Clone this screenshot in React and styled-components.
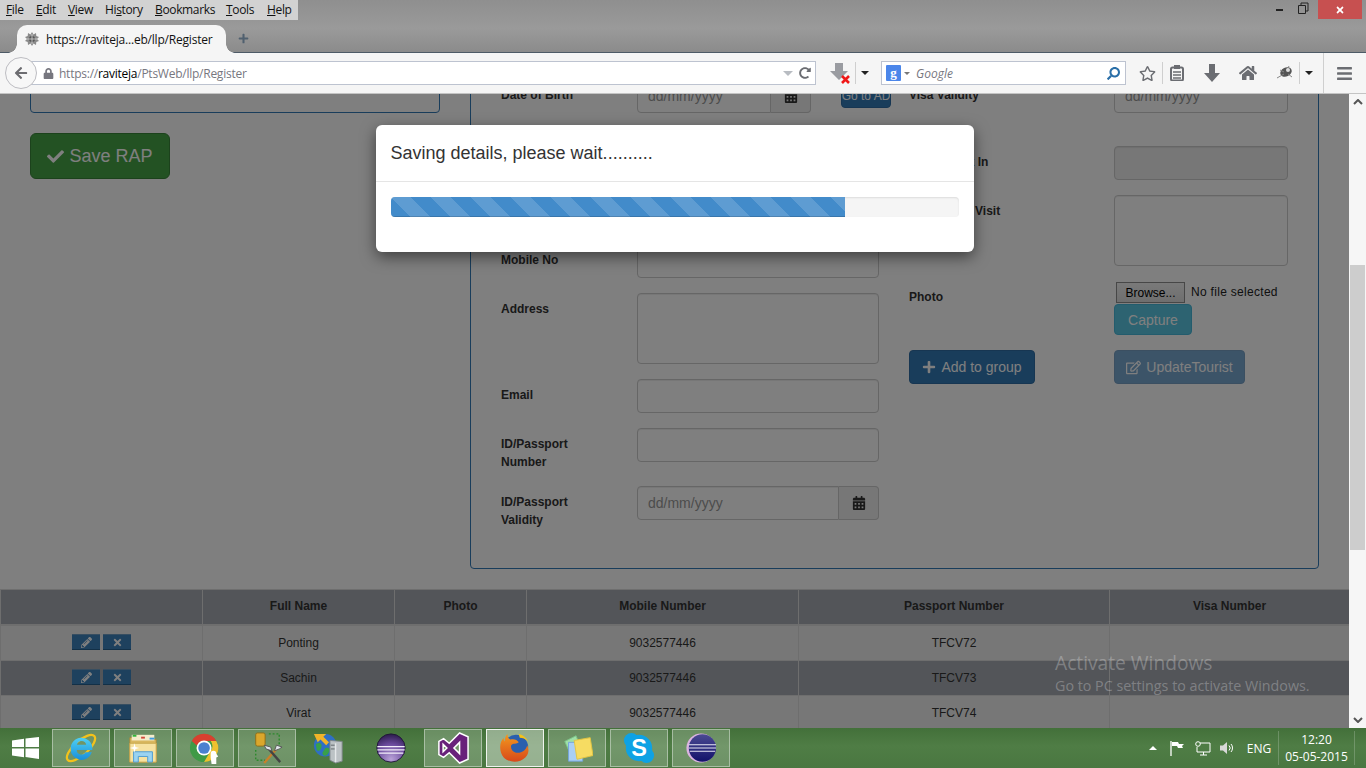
import React from 'react';
import styled, {createGlobalStyle} from 'styled-components';
import {FaArrowLeft, FaLock, FaRegStar, FaHome, FaBars, FaCheck, FaPlus, FaRegEdit, FaCalendarAlt, FaPencilAlt, FaTimes, FaSearch, FaRedoAlt} from 'react-icons/fa';

const GlobalStyle = createGlobalStyle`
	html, body {
		margin: 0;
		padding: 0;
		background: #7f7f7f;
		overflow: hidden;
	}
	* {
		box-sizing: border-box;
	}
`;

const UI_FONT = '"Open Sans", "Noto Sans", sans-serif';
const PAGE_FONT = '"Liberation Sans", Arial, sans-serif';

const Screen = styled.div`
	position: relative;
	width: 1366px;
	height: 768px;
	display: flex;
	flex-direction: column;
	overflow: hidden;
	font-family: ${PAGE_FONT};
`;

//Browser title area
const TitleArea = styled.div`
	position: relative;
	height: 53px;
	flex: none;
	background: linear-gradient(#8f8f8f, #9a9a9a 55%, #8b8b8b);
	border-bottom: 1px solid #4d5a66;
`;

const MenuBar = styled.div`
	display: flex;
	width: 298px;
	height: 20px;
	padding-left: 6px;
	background: #d2d2d2;
	font: 12px/20px ${UI_FONT};
	letter-spacing: -0.35px;
	color: #111;
`;

const MenuItem = styled.span`
	width: ${p => p.$w}px;
`;

const TabStrip = styled.div`
	display: flex;
	align-items: flex-end;
	height: 32px;
	padding-left: 17px;
`;

const Tab = styled.div`
	position: relative;
	z-index: 1;
	display: flex;
	align-items: center;
	gap: 7px;
	width: 209px;
	height: 28px;
	margin-bottom: -1px;
	padding-left: 8px;
	background: #f5f5f5;
	border-radius: 10px 10px 0 0;
	font: 12px ${UI_FONT};
	letter-spacing: -0.2px;
	color: #111;
	&::before, &::after {
		content: '';
		position: absolute;
		bottom: 0;
		width: 9px;
		height: 9px;
	}
	&::before {
		left: -9px;
		background: radial-gradient(circle at 0 0, transparent 8.5px, #f5f5f5 9px);
	}
	&::after {
		right: -9px;
		background: radial-gradient(circle at 100% 0, transparent 8.5px, #f5f5f5 9px);
	}
`;

const NewTab = styled.div`
	display: flex;
	margin: 0 0 8px 12px;
	color: #50606f;
`;

const WindowControls = styled.div`
	position: absolute;
	top: 0;
	right: 4px;
	display: flex;
	height: 19px;
`;

const CloseButton = styled.div`
	display: flex;
	align-items: center;
	justify-content: center;
	width: 44px;
	height: 19px;
	margin-left: 9px;
	background: #c75050;
`;

//Navigation bar
const NavBar = styled.div`
	display: flex;
	align-items: center;
	height: 41px;
	flex: none;
	padding-left: 5px;
	background: #f5f5f5;
	border-bottom: 1px solid #c4c4c4;
	color: #6d6d72;
`;

const BackButton = styled.div`
	position: relative;
	z-index: 1;
	display: flex;
	align-items: center;
	justify-content: center;
	width: 32px;
	height: 32px;
	background: #f7f7f7;
	border: 1px solid #bdbdc2;
	border-radius: 50%;
	color: #6c6c70;
`;

const UrlBar = styled.div`
	display: flex;
	align-items: center;
	width: 790px;
	height: 24px;
	margin-left: -11px;
	padding-left: 16px;
	background: #fff;
	border: 1px solid #bdc3d0;
	font: 12px ${UI_FONT};
	letter-spacing: -0.25px;
	color: #77777f;
`;

const UrlText = styled.span`
	flex: 1;
	margin-left: 5px;
	b {
		font-weight: 400;
		color: #000;
	}
`;

const Caret = styled.span`
	display: inline-block;
	width: 0;
	height: 0;
	margin-right: ${p => p.$after || 0}px;
	border-left: ${p => p.$size || 4}px solid transparent;
	border-right: ${p => p.$size || 4}px solid transparent;
	border-top: ${p => p.$size || 4}px solid ${p => p.$color || '#222'};
`;

const UpCaret = styled(Caret)`
	transform: rotate(180deg);
`;

const Divider = styled.span`
	flex: none;
	width: 1px;
	height: ${p => p.$tall ? 40 : 22}px;
	margin-right: ${p => p.$after || 0}px;
	background: #cfcfcf;
`;

const ToolSlot = styled.div`
	display: flex;
	flex: none;
	align-items: center;
	justify-content: center;
	width: ${p => p.$w}px;
	padding-left: ${p => p.$shift || 0}px;
	color: #6b6d72;
`;

const SearchBar = styled.div`
	display: flex;
	align-items: center;
	flex: none;
	width: 245px;
	height: 24px;
	margin-left: 7px;
	padding: 0 5px 0 4px;
	background: #fff;
	border: 1px solid #bdc3d0;
	font: italic 12px ${UI_FONT};
	color: #77777f;
`;

const GoogleBadge = styled.span`
	width: 15px;
	height: 16px;
	margin-right: 3px;
	background: #4b86ea;
	border-radius: 1px;
	color: #fff;
	font: 700 13px/15px "Liberation Serif", serif;
	text-align: center;
`;

const SearchText = styled.span`
	flex: 1;
	margin-left: 6px;
`;

const SearchIcon = styled(FaSearch)`
	transform: scaleX(-1);
	color: #2a6fa8;
`;

//Page
const PageRow = styled.div`
	display: flex;
	flex: 1;
	min-height: 0;
`;

const Viewport = styled.div`
	position: relative;
	width: 1349px;
	overflow: hidden;
	background: #fff;
	font-size: 12px;
	color: #333;
`;

const Backdrop = styled.div`
	position: absolute;
	inset: 0;
	display: flex;
	justify-content: center;
	padding-top: 31px;
	background: rgba(0, 0, 0, 0.5);
`;

const Modal = styled.div`
	width: 598px;
	height: 127px;
	background: #fff;
	border-radius: 6px;
	box-shadow: 0 5px 15px rgba(0, 0, 0, 0.5);
`;

const ModalHeader = styled.div`
	padding: 15px;
	border-bottom: 1px solid #e5e5e5;
	font-size: 18px;
	line-height: 26px;
	color: #333;
`;

const ModalBody = styled.div`
	padding: 15px;
`;

const Progress = styled.div`
	height: 20px;
	overflow: hidden;
	background: #f5f5f5;
	border-radius: 4px;
	box-shadow: inset 0 1px 2px rgba(0, 0, 0, 0.1);
`;

const ProgressBar = styled.div`
	height: 100%;
	background-color: #428bca;
	background-image: linear-gradient(45deg, rgba(255,255,255,.15) 25%, transparent 25%, transparent 50%, rgba(255,255,255,.15) 50%, rgba(255,255,255,.15) 75%, transparent 75%, transparent);
	background-size: 40px 40px;
	box-shadow: inset 0 -1px 0 rgba(0, 0, 0, 0.15);
`;

const Columns = styled.div`
	display: grid;
	grid-template-columns: 410px 849px;
	gap: 30px;
	margin: -40px 0 0 30px;
`;

const LeftPanel = styled.div`
	height: 59px;
	border: 1px solid #337ab7;
	border-radius: 4px;
`;

const Button = styled.button`
	display: inline-flex;
	align-items: center;
	justify-content: center;
	gap: 5px;
	width: ${p => p.$w}px;
	height: ${p => p.$h || 34}px;
	padding: 0;
	background: ${p => p.$bg};
	border: 1px solid ${p => p.$border};
	border-radius: 4px;
	color: #fff;
	font: ${p => p.$size || 14}px ${PAGE_FONT};
	opacity: ${p => p.$faded ? 0.65 : 1};
`;

const SaveButton = styled(Button)`
	margin-top: 20px;
	border-radius: 6px;
`;

const FormPanel = styled.div`
	display: grid;
	grid-template-columns: 408px 379px;
	height: 515px;
	padding: 24px 30px 0;
	border: 1px solid #337ab7;
	border-radius: 4px;
`;

const FormColumn = styled.div`
	display: flex;
	flex-direction: column;
`;

const FormRow = styled.div`
	display: flex;
	align-items: flex-start;
	margin-bottom: ${p => p.$after === undefined ? 15 : p.$after}px;
`;

const Label = styled.label`
	flex: none;
	width: ${p => p.$w || 136}px;
	padding-top: 7px;
	font-weight: 700;
	line-height: 18px;
`;

const FieldStack = styled.div`
	display: flex;
	flex-direction: column;
`;

const Input = styled.div`
	width: ${p => p.$w || 242}px;
	height: ${p => p.$h || 34}px;
	padding: 6px 10px;
	background: ${p => p.$disabled ? '#eee' : '#fff'};
	border: 1px solid #ccc;
	border-radius: 4px;
	box-shadow: inset 0 1px 1px rgba(0, 0, 0, 0.075);
	font-size: 14px;
	line-height: 20px;
	color: #999;
`;

const InputGroup = styled.div`
	display: flex;
	width: ${p => p.$w}px;
	height: 34px;
`;

const GroupInput = styled(Input)`
	flex: 1;
	width: auto;
	border-radius: 4px 0 0 4px;
`;

const Addon = styled.div`
	display: flex;
	align-items: center;
	justify-content: center;
	width: 40px;
	background: #eee;
	border: 1px solid #ccc;
	border-left: 0;
	border-radius: 0 4px 4px 0;
	color: #333;
	font-size: 14px;
`;

const GoButton = styled(Button)`
	margin: 5px 0 0 30px;
	white-space: nowrap;
	overflow: hidden;
`;

const FileRow = styled.div`
	display: flex;
	align-items: flex-start;
	gap: 6px;
	height: 23px;
	padding: 1px 0 0 2px;
	line-height: 21px;
	letter-spacing: 0.3px;
	color: #222;
`;

const BrowseButton = styled.div`
	width: 69px;
	height: 21px;
	background: linear-gradient(#f4f4f4, #dedede);
	border: 1px solid #8e8e8e;
	line-height: 20px;
	text-align: center;
	color: #000;
	letter-spacing: 0;
`;

const ButtonRow = styled.div`
	display: flex;
	margin-top: 15px;
`;

const ButtonSlot = styled.div`
	width: 205px;
`;

const Table = styled.table`
	width: 1349px;
	margin-top: 20px;
	table-layout: fixed;
	border-collapse: collapse;
	font-size: 12px;
	line-height: 18px;
	text-align: center;
	th, td {
		padding: 8px;
		border: 1px solid #ddd;
	}
	th {
		padding: 7px 8px 9px;
		border-bottom-width: 2px;
	}
`;

const Col = styled.col`
	width: ${p => p.$w}px;
`;

const HeadRow = styled.tr`
	background: #a6abb3;
`;

const BodyRow = styled.tr`
	background: ${p => p.$dark ? '#a6abb3' : '#eee'};
`;

const MiniButton = styled.span`
	display: inline-flex;
	align-items: center;
	justify-content: center;
	width: 28px;
	height: 16px;
	margin: 0 1.5px;
	vertical-align: top;
	background: #3c82bd;
	border-top: 1px solid #6f9cc2;
	border-bottom: 1px solid #26618f;
	color: #fff;
	font-size: 11px;
`;

const Scrollbar = styled.div`
	position: relative;
	display: flex;
	flex: 1;
	flex-direction: column;
	align-items: center;
	justify-content: space-between;
	padding: 5px 0;
	background: #f6f6f6;
`;

const Thumb = styled.div`
	position: absolute;
	top: 171px;
	left: 1px;
	width: 15px;
	height: 285px;
	background: #cdcdcd;
`;

const Watermark = styled.div`
	position: absolute;
	left: 1055px;
	top: 649px;
	font-family: ${UI_FONT};
	color: rgba(255, 255, 255, 0.27);
	font-size: 14.3px;
	line-height: 20px;
	div:first-child {
		font-size: 19.2px;
		line-height: 27px;
	}
`;

//Taskbar
const Taskbar = styled.div`
	display: flex;
	align-items: center;
	flex: none;
	height: 40px;
	padding-left: 12px;
	background: linear-gradient(#43703a, #4f7d45 45%, #4a7741);
	color: #fff;
	font-family: ${UI_FONT};
`;

const StartSlot = styled.div`
	display: flex;
	width: 40px;
`;

const TaskButton = styled.div`
	display: flex;
	align-items: center;
	justify-content: center;
	width: 58px;
	height: 38px;
	margin-right: 4px;
	background: ${p => p.$active ? 'rgba(255,255,255,.42)' : p.$plain ? 'transparent' : 'rgba(255,255,255,.2)'};
	border: 1px solid ${p => p.$active ? 'rgba(255,255,255,.85)' : p.$plain ? 'transparent' : 'rgba(255,255,255,.4)'};
`;

const Tray = styled.div`
	display: flex;
	align-items: center;
	margin-left: auto;
	height: 100%;
`;

const TrayIcon = styled.div`
	display: flex;
	justify-content: center;
	width: ${p => p.$w}px;
`;

const Lang = styled.div`
	width: 40px;
	padding-left: 2px;
	text-align: center;
	font-size: 12px;
`;

const Clock = styled.div`
	width: 77px;
	margin-right: 1px;
	border-left: 1px solid rgba(255, 255, 255, 0.2);
	border-right: 1px solid rgba(255, 255, 255, 0.2);
	font-size: 12px;
	line-height: 17px;
	text-align: center;
`;

const TaskIcon = ({children}) => (
	<svg width="32" height="32" viewBox="0 0 34 34">{children}</svg>
);

const StartLogo = () => (
	<svg width="27" height="22" viewBox="0 0 27 22">
		<path d="M0 3.500 12 1.700V10H0zM13.500 1.500 27 0v10H13.500zM0 11.500h12v8.800L0 18.600zM13.500 11.500H27V22l-13.500-1.900z" fill="#fff"/>
	</svg>
);

const IeIcon = () => (
	<TaskIcon>
		<defs>
			<linearGradient id="ieBlue" x1="0" y1="0" x2="0" y2="1">
				<stop offset="0" stopColor="#4fd0f5"/>
				<stop offset="1" stopColor="#1a8fd8"/>
			</linearGradient>
		</defs>
		<ellipse cx="17" cy="17" rx="19" ry="7.500" transform="rotate(-42 17 17)" fill="none" stroke="#f3c21b" strokeWidth="2.400"/>
		<path d="M6 18a11.500 11.500 0 0 1 23-1v2H12.500a5 5 0 0 0 9.300 2.500h6.700A11.500 11.500 0 0 1 6 18zm6.700-4.500h9.800a5 5 0 0 0-9.800 0z" fill="url(#ieBlue)"/>
	</TaskIcon>
);

const FolderIcon = () => (
	<TaskIcon>
		<path d="M3 6h12l2 2h14v24H3z" fill="#d9b85f" stroke="#a88a3c"/>
		<rect x="5" y="3" width="24" height="6" fill="#f4eccb"/>
		<rect x="6" y="3" width="4" height="2" fill="#2fb53a"/>
		<rect x="15" y="5" width="4" height="2" fill="#d2483c"/>
		<rect x="24" y="6" width="5" height="2" fill="#3f9ce0"/>
		<path d="M3 12h28v20H3z" fill="#f6e2a0" stroke="#c9a94e"/>
		<path d="M7 32v-11h20v11h-5v-6H12v6z" fill="#9ad3f0" stroke="#4c9bd0"/>
		<path d="M8 12l1 4 4 1-4 1-1 4-1-4-4-1 4-1z" fill="#fff"/>
	</TaskIcon>
);

const ChromeIcon = () => (
	<TaskIcon>
		<circle cx="16" cy="17" r="15" fill="#3f9a46"/>
		<path d="M29 9.500A15 15 0 0 1 16 32l7-12a8 8 0 0 0 0-10.500z" fill="#efc12f"/>
		<path d="M3 9.500A15 15 0 0 1 29 9.500H16a8 8 0 0 0-7.500 5z" fill="#d8402f"/>
		<circle cx="16" cy="17" r="8" fill="#fff"/>
		<circle cx="16" cy="17" r="6.200" fill="#4a80d0"/>
		<path d="M23 23a3 3 0 0 1 6 0l2 3-2 1v7h-5l-1-7z" fill="#fff"/>
	</TaskIcon>
);

const ToolsIcon = () => (
	<TaskIcon>
		<rect x="5" y="1" width="10" height="14" rx="2" fill="#dba72c" stroke="#8f6d18"/>
		<path d="M19 2h11v11M5 19v11h10" fill="none" stroke="#2c8a2c" strokeWidth="1.500" strokeDasharray="2 2"/>
		<path d="M14 33 27 18" stroke="#c9802a" strokeWidth="2.500"/>
		<path d="M18 17 31 32" stroke="#444" strokeWidth="2.500"/>
		<path d="M14 14l7 2 1 4-6-2zM25 20l2-6 6 2-3 2z" fill="#dfe5ea" stroke="#555"/>
	</TaskIcon>
);

const GlobeServerIcon = () => (
	<TaskIcon>
		<circle cx="13" cy="14" r="12" fill="#2f6fc4"/>
		<path d="M3 13c4-3 7-1 6 3s-3 5-5 3zM13 17c5-1 6 2 3 6s-6 2-6-1z" fill="#39a04a"/>
		<path d="M1 2h13l-3 3 6 6-3 3-6-6-3 3z" fill="#f0b429"/>
		<path d="M18 9l13 1v21l-7 2-6-3z" fill="#bcc2c5" stroke="#7c8488"/>
		<path d="M24 12v20" stroke="#e5e8ea" strokeWidth="1.500"/>
		<path d="M19 14h4M19 18h4" stroke="#5f666a"/>
	</TaskIcon>
);

const OrbIcon = () => (
	<TaskIcon>
		<defs>
			<radialGradient id="orbPurple" cx="0.5" cy="0.9" r="0.9">
				<stop offset="0" stopColor="#b9a2d8"/>
				<stop offset="0.6" stopColor="#6a4a9c"/>
				<stop offset="1" stopColor="#2b1b4b"/>
			</radialGradient>
		</defs>
		<circle cx="17" cy="17" r="15" fill="url(#orbPurple)" stroke="#1f1536"/>
		<path d="M2.500 15.500h29M2.500 19h29M4 22.500h26" stroke="#f3eefa" strokeWidth="1.200"/>
	</TaskIcon>
);

const StudioIcon = () => (
	<TaskIcon>
		<path d="M24 1 33 5v24l-9 4-11-11-6 5-5-3V10l5-3 6 5zM24 11l-6 6 6 6zM6.500 13v8l4-4z" fill="#68217a" stroke="#fff" strokeWidth="1.600"/>
	</TaskIcon>
);

const FoxIcon = () => (
	<TaskIcon>
		<defs>
			<linearGradient id="foxOrange" x1="0" y1="0" x2="0" y2="1">
				<stop offset="0" stopColor="#f29a1f"/>
				<stop offset="1" stopColor="#d8481a"/>
			</linearGradient>
		</defs>
		<circle cx="18" cy="16" r="13" fill="#2a5fae"/>
		<path d="M9 2c0 3 1 5 3 6 4-1 7 0 9 3-2 2-6 1-8 3-1 3 1 7 5 8 6 1 11-3 12-8 2 4 2 9-2 13-6 6-17 6-23 0C0 21 0 11 5 6c0 2 0 3 1 4 0-3 1-6 3-8z" fill="url(#foxOrange)"/>
		<path d="M21 2c5 1 8 4 10 8-3-3-6-4-9-4z" fill="#f3c21b"/>
	</TaskIcon>
);

const NotesIcon = () => (
	<TaskIcon>
		<path d="M4 10 16 4l7 18-11 6z" fill="#9fe0a8" stroke="#7cc488"/>
		<path d="M8 11h15v20H8z" fill="#a9cff5" stroke="#74a4dc"/>
		<path d="M14 9l17-3 3 19-17 4z" fill="#f6dc62" stroke="#e2c441"/>
	</TaskIcon>
);

const SkypeIcon = () => (
	<TaskIcon>
		<circle cx="9" cy="9" r="8" fill="#0ea2e4"/>
		<circle cx="25" cy="25" r="8" fill="#0ea2e4"/>
		<circle cx="17" cy="17" r="14" fill="#0ea2e4"/>
		<text x="17" y="26" textAnchor="middle" fontFamily={PAGE_FONT} fontWeight="700" fontSize="25" fill="#fff">S</text>
	</TaskIcon>
);

const EclipseIcon = () => (
	<TaskIcon>
		<defs>
			<linearGradient id="eclipseNavy" x1="0" y1="0" x2="0" y2="1">
				<stop offset="0" stopColor="#4b4a92"/>
				<stop offset="1" stopColor="#12126a"/>
			</linearGradient>
		</defs>
		<circle cx="17" cy="17" r="15.500" fill="#dcb4e2"/>
		<circle cx="18.500" cy="17" r="14.500" fill="url(#eclipseNavy)"/>
		<path d="M4 13.500h29M4 17h29M5 20.500h27" stroke="#e8e8f4" strokeWidth="1.200"/>
	</TaskIcon>
);

const AddonBug = () => (
	<svg width="18" height="16" viewBox="0 0 18 16">
		<ellipse cx="10" cy="7" rx="6" ry="4.500" fill="#555" transform="rotate(-25 10 7)"/>
		<path d="M1 13 8 9M4 5l4 2M13 1l-2 4M16 12l-4-3" stroke="#888"/>
		<circle cx="12" cy="5" r="2" fill="#ddd"/>
	</svg>
);

const SiteIcon = () => (
	<svg width="14" height="14" viewBox="0 0 14 14">
		<path d="M7 0l1.500 2.500L11 1l.3 3L14 5l-2 2 2 2-2.700 1-.3 3-2.500-1.500L7 14l-1.500-2.500L3 13l-.3-3L0 9l2-2-2-2 2.700-1L3 1l2.500 1.500z" fill="#8a8a8a"/>
		<circle cx="7" cy="7" r="3" fill="#555"/>
		<path d="M2 7h10M7 2v10" stroke="#d5d5d5" strokeWidth="0.800"/>
	</svg>
);

const DownloadBlocked = () => (
	<svg width="22" height="22" viewBox="0 0 22 22">
		<path d="M6 1h8v8h5l-9 9-9-9h5z" fill="#9a9ca1"/>
		<path d="M13 14l7 7M20 14l-7 7" stroke="#f01818" strokeWidth="2.600"/>
	</svg>
);

const DownloadArrow = () => (
	<svg width="16" height="18" viewBox="0 0 16 18">
		<path d="M5 0h6v9h5l-8 9-8-9h5z" fill="#6b6d72"/>
	</svg>
);

const ReadingList = () => (
	<svg width="14" height="16" viewBox="0 0 14 16">
		<rect x="1" y="2.500" width="12" height="13" rx="1.500" fill="none" stroke="#6b6d72" strokeWidth="2"/>
		<rect x="4" y="0" width="6" height="4" fill="#6b6d72"/>
		<path d="M3 7h8M3 10h8M3 13h8" stroke="#6b6d72" strokeWidth="1.400"/>
	</svg>
);

const FlagIcon = () => (
	<svg width="15" height="15" viewBox="0 0 15 15">
		<path d="M1 0v15" stroke="#fff" strokeWidth="1.300"/>
		<path d="M2 1h6l1 2h5l-2 2 1 2H8L7 5H2z" fill="#fff"/>
	</svg>
);

const NetworkIcon = () => (
	<svg width="16" height="15" viewBox="0 0 16 15">
		<path d="M5 2h10v9H2V6" fill="none" stroke="#fff"/>
		<path d="M5 14h7M8.500 11v3" stroke="#fff"/>
		<circle cx="3" cy="3" r="2.300" fill="none" stroke="#fff"/>
	</svg>
);

const SpeakerIcon = () => (
	<svg width="16" height="14" viewBox="0 0 16 14">
		<path d="M1 4.500h3L8 1v12L4 9.500H1z" fill="#d8d8d8"/>
		<path d="M10 4.500a3.500 3.500 0 0 1 0 5M12 3a6 6 0 0 1 0 8" fill="none" stroke="#fff"/>
	</svg>
);

const COLUMNS = [202, 192, 132, 272, 311, 240];

const TOURISTS = [
	{name: 'Ponting', mobile: '9032577446', passport: 'TFCV72'},
	{name: 'Sachin', mobile: '9032577446', passport: 'TFCV73'},
	{name: 'Virat', mobile: '9032577446', passport: 'TFCV74'},
];

const TASK_BUTTONS = [
	{icon: <IeIcon />},
	{icon: <FolderIcon />},
	{icon: <ChromeIcon />},
	{icon: <ToolsIcon />},
	{icon: <GlobeServerIcon />, plain: true},
	{icon: <OrbIcon />, plain: true},
	{icon: <StudioIcon />},
	{icon: <FoxIcon />, active: true},
	{icon: <NotesIcon />},
	{icon: <SkypeIcon />},
	{icon: <EclipseIcon />},
];

const MENU = [
	[30, <><u>F</u>ile</>],
	[32, <><u>E</u>dit</>],
	[37, <><u>V</u>iew</>],
	[50, <>Hi<u>s</u>tory</>],
	[71, <><u>B</u>ookmarks</>],
	[41, <><u>T</u>ools</>],
	[30, <><u>H</u>elp</>],
];

const DateGroup = ({width}) => (
	<InputGroup $w={width}>
		<GroupInput>dd/mm/yyyy</GroupInput>
		<Addon><FaCalendarAlt /></Addon>
	</InputGroup>
);

const App = () => (
	<Screen>
		<GlobalStyle />
		<TitleArea>
			<MenuBar>
				{MENU.map(([width, label], index) => <MenuItem key={index} $w={width}>{label}</MenuItem>)}
			</MenuBar>
			<TabStrip>
				<Tab>
					<SiteIcon />
					<span>https://raviteja...eb/llp/Register</span>
				</Tab>
				<NewTab><FaPlus size={11} /></NewTab>
			</TabStrip>
			<WindowControls>
				<svg width="33" height="19" viewBox="0 0 33 19">
					<rect x="0" y="9" width="7" height="2" fill="#222"/>
					<path d="M22.500 5.500h7v8h-7zM25 5V3h7v8h-2" fill="none" stroke="#222"/>
				</svg>
				<CloseButton><FaTimes size={10} color="#fff" /></CloseButton>
			</WindowControls>
		</TitleArea>

		<NavBar>
			<BackButton><FaArrowLeft size={14} /></BackButton>
			<UrlBar>
				<FaLock size={11} />
				<UrlText>https://<b>raviteja</b>/PtsWeb/llp/Register</UrlText>
				<Caret $size={5} $color="#b8bcc2" $after={2} />
				<ToolSlot $w={20}><FaRedoAlt size={12} /></ToolSlot>
			</UrlBar>
			<ToolSlot $w={39} $shift={8}><DownloadBlocked /></ToolSlot>
			<Divider />
			<ToolSlot $w={18}><Caret /></ToolSlot>
			<SearchBar>
				<GoogleBadge>g</GoogleBadge>
				<Caret $size={3} $color="#777" />
				<SearchText>Google</SearchText>
				<SearchIcon size={13} />
			</SearchBar>
			<ToolSlot $w={36} $shift={6}><FaRegStar size={17} /></ToolSlot>
			<Divider />
			<ToolSlot $w={28}><ReadingList /></ToolSlot>
			<ToolSlot $w={42}><DownloadArrow /></ToolSlot>
			<ToolSlot $w={30}><FaHome size={18} /></ToolSlot>
			<ToolSlot $w={36} $shift={8}><AddonBug /></ToolSlot>
			<Divider />
			<ToolSlot $w={17}><Caret /></ToolSlot>
			<ToolSlot $w={6} />
			<Divider $tall />
			<ToolSlot $w={41}><FaBars size={17} /></ToolSlot>
		</NavBar>

		<PageRow>
			<Viewport>
				<Columns>
					<div>
						<LeftPanel />
						<SaveButton $w={140} $h={46} $bg="#47a447" $border="#398439" $size={18}>
							<FaCheck size={17} /> Save RAP
						</SaveButton>
					</div>
					<FormPanel>
						<FormColumn>
							<FormRow $after={131}>
								<Label>Date of Birth</Label>
								<DateGroup width={174} />
								<GoButton $w={50} $h={24} $bg="#337ab7" $border="#2e6da4" $size={12}>Go to AD</GoButton>
							</FormRow>
							<FormRow>
								<Label>Mobile No</Label>
								<Input />
							</FormRow>
							<FormRow>
								<Label>Address</Label>
								<Input $h={71} />
							</FormRow>
							<FormRow>
								<Label>Email</Label>
								<Input />
							</FormRow>
							<FormRow>
								<Label>ID/Passport<br />Number</Label>
								<Input />
							</FormRow>
							<FormRow>
								<Label>ID/Passport<br />Validity</Label>
								<DateGroup width={242} />
							</FormRow>
						</FormColumn>
						<FormColumn>
							<FormRow $after={33}>
								<Label $w={205}>Visa Validity</Label>
								<Input $w={174}>dd/mm/yyyy</Input>
							</FormRow>
							<FormRow>
								<Label $w={205}>Date Check In</Label>
								<Input $w={174} $disabled />
							</FormRow>
							<FormRow>
								<Label $w={205}>Purpose of Visit</Label>
								<Input $w={174} $h={71} />
							</FormRow>
							<FormRow $after={0}>
								<Label $w={205}>Photo</Label>
								<FieldStack>
									<FileRow><BrowseButton>Browse...</BrowseButton>No file selected</FileRow>
									<Button $w={78} $h={31} $bg="#5bc6e2" $border="#46b8da">Capture</Button>
								</FieldStack>
							</FormRow>
							<ButtonRow>
								<ButtonSlot>
									<Button $w={126} $bg="#337ab7" $border="#2e6da4"><FaPlus size={14} /> Add to group</Button>
								</ButtonSlot>
								<Button $w={131} $bg="#337ab7" $border="#2e6da4" $faded><FaRegEdit size={15} /> UpdateTourist</Button>
							</ButtonRow>
						</FormColumn>
					</FormPanel>
				</Columns>

				<Table>
					<colgroup>
						{COLUMNS.map((width, index) => <Col key={index} $w={width} />)}
					</colgroup>
					<thead>
						<HeadRow>
							<th></th>
							<th>Full Name</th>
							<th>Photo</th>
							<th>Mobile Number</th>
							<th>Passport Number</th>
							<th>Visa Number</th>
						</HeadRow>
					</thead>
					<tbody>
						{TOURISTS.map((tourist, index) => (
							<BodyRow key={tourist.passport} $dark={index === 1}>
								<td>
									<MiniButton><FaPencilAlt /></MiniButton>
									<MiniButton><FaTimes /></MiniButton>
								</td>
								<td>{tourist.name}</td>
								<td></td>
								<td>{tourist.mobile}</td>
								<td>{tourist.passport}</td>
								<td></td>
							</BodyRow>
						))}
					</tbody>
				</Table>

				<Backdrop>
					<Modal>
						<ModalHeader>Saving details, please wait..........</ModalHeader>
						<ModalBody>
							<Progress>
								<ProgressBar style={{width: '80%'}} />
							</Progress>
						</ModalBody>
					</Modal>
				</Backdrop>
			</Viewport>
			<Scrollbar>
				<svg width="10" height="6" viewBox="0 0 10 6"><path d="M1 5l4-4 4 4" fill="none" stroke="#555" strokeWidth="2"/></svg>
				<Thumb />
				<svg width="10" height="6" viewBox="0 0 10 6"><path d="M1 1l4 4 4-4" fill="none" stroke="#555" strokeWidth="2"/></svg>
			</Scrollbar>
		</PageRow>

		<Taskbar>
			<StartSlot><StartLogo /></StartSlot>
			{TASK_BUTTONS.map((button, index) => (
				<TaskButton key={index} $active={button.active} $plain={button.plain}>{button.icon}</TaskButton>
			))}
			<Tray>
				<TrayIcon $w={24}><UpCaret $size={4} $color="#fff" /></TrayIcon>
				<TrayIcon $w={25}><FlagIcon /></TrayIcon>
				<TrayIcon $w={25}><NetworkIcon /></TrayIcon>
				<TrayIcon $w={23}><SpeakerIcon /></TrayIcon>
				<Lang>ENG</Lang>
				<Clock>12:20<br />05-05-2015</Clock>
				<TrayIcon $w={10} />
			</Tray>
		</Taskbar>

		<Watermark>
			<div>Activate Windows</div>
			<div>Go to PC settings to activate Windows.</div>
		</Watermark>
	</Screen>
);

export default App;
